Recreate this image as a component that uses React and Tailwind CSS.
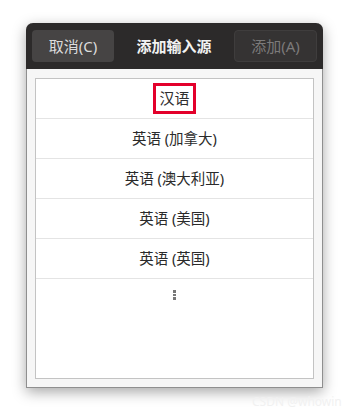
import React from "react";

const ROWS = ["英语 (加拿大)", "英语 (澳大利亚)", "英语 (美国)", "英语 (英国)"];

export default function App() {
  return (
    <div
      className="w-[349px] h-[417px] bg-white overflow-hidden relative"
      style={{ fontFamily: '"Noto Sans", "Noto Sans CJK SC", sans-serif' }}
    >
      <div className="pl-[26px] pt-[23px]">
        {/* Window */}
        <div className="w-[297px] h-[365px] flex flex-col rounded-t-[7px] border border-[#8f8f8f] border-t-0 bg-[#f6f6f6] shadow-[0_4px_14px_rgba(0,0,0,0.35)]">
          {/* Header bar */}
          <header className="h-[46px] flex-shrink-0 flex items-center justify-between px-[6px] bg-[#2c2a2a] rounded-t-[7px] -mx-px">
            <button className="w-[82px] h-[32px] rounded-[4px] bg-[#464444] text-[#dcdcdc] text-[15px] flex items-center justify-center">
              取消(C)
            </button>
            <span className="text-[15px] font-bold text-[#f2f2f2]">添加输入源</span>
            <button className="w-[83px] h-[32px] rounded-[4px] bg-[#353333] border border-[#3f3d3d] text-[#7c7a7a] text-[15px] flex items-center justify-center">
              添加(A)
            </button>
          </header>

          {/* Body */}
          <div className="flex-1 p-[8px] pt-[9px] pb-[8px]">
            <div className="h-full border border-[#c3c3c3] bg-white flex flex-col">
              <div className="h-10 border-b border-[#e4e4e4] flex items-center justify-center">
                <span className="border-[3px] border-[#e3002b] px-[3px] h-[31px] flex items-center text-[15px] text-[#2e2e2e]">
                  汉语
                </span>
              </div>
              {ROWS.map((r) => (
                <div
                  key={r}
                  className="h-10 border-b border-[#e4e4e4] flex items-center justify-center text-[14.5px] text-[#2a2a2a]"
                >
                  {r}
                </div>
              ))}
              <div className="h-10 flex justify-center pt-[11px]">
                <div className="flex flex-col gap-[1px]">
                  <div className="w-[2.5px] h-[2.5px] bg-[#777]" />
                  <div className="w-[2.5px] h-[2.5px] bg-[#777]" />
                  <div className="w-[2.5px] h-[2.5px] bg-[#777]" />
                </div>
              </div>
            </div>
          </div>
        </div>
      </div>

      {/* Watermark */}
      <span className="absolute left-[252px] top-[393px] text-[12px] text-[#f1f1f1]">
        CSDN @whowin
      </span>
    </div>
  );
}
